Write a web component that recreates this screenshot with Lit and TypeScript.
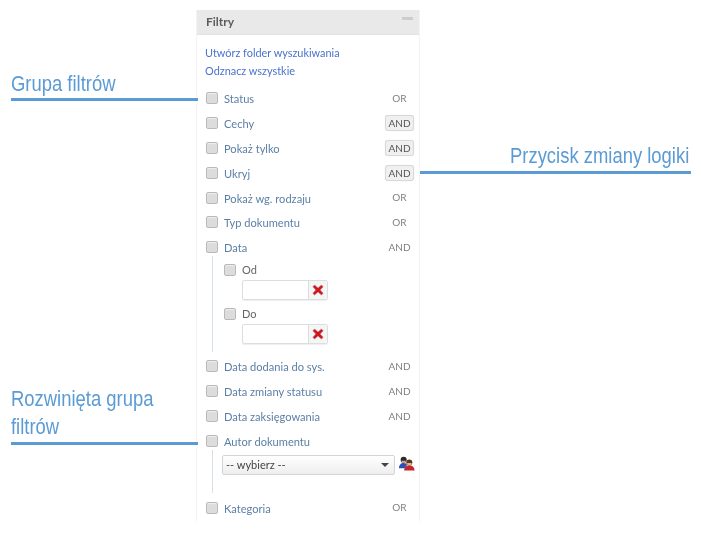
import { LitElement, html, css, svg } from 'lit'
import { customElement } from 'lit/decorators.js'

const clearIcon = svg`<svg width="12" height="12" viewBox="0 0 12 12"><path d="M2.600 1 6 3.900 9.400 1 11.200 2.800 8.200 6 11.200 9.300 9.400 11 6 8.100 2.600 11 .8 9.300 3.800 6 .8 2.800z" fill="#d3161c" stroke="#a9858a" stroke-width=".5"/></svg>`

const usersIcon = svg`<svg width="17" height="17" viewBox="0 0 18 18">
  <circle cx="6" cy="5" r="3.200" fill="#2b2a33"/>
  <path d="M3.700 6h4.600l-.5 2.200H4.200z" fill="#e0a678"/>
  <path d="M1 14c0-3.400 2-5.600 5-5.600 2 0 3 1 3.600 2.200L7 14z" fill="#2b50b8"/>
  <circle cx="12" cy="8" r="3.200" fill="#5a3b22"/>
  <path d="M9.600 8.600h4.800l-.5 2.600H10.100z" fill="#eeb184"/>
  <path d="M6.500 16.500c0-3.500 2.200-5.500 5.500-5.500s5.500 2 5.500 5.500z" fill="#c2272d"/>
</svg>`

interface Group {
  label: string
  logic: string
  button?: boolean
}

const top: Group[] = [
  { label: 'Status', logic: 'OR' },
  { label: 'Cechy', logic: 'AND', button: true },
  { label: 'Pokaż tylko', logic: 'AND', button: true },
  { label: 'Ukryj', logic: 'AND', button: true },
  { label: 'Pokaż wg. rodzaju', logic: 'OR' },
  { label: 'Typ dokumentu', logic: 'OR' },
  { label: 'Data', logic: 'AND' },
]

const middle: Group[] = [
  { label: 'Data dodania do sys.', logic: 'AND' },
  { label: 'Data zmiany statusu', logic: 'AND' },
  { label: 'Data zaksięgowania', logic: 'AND' },
  { label: 'Autor dokumentu', logic: '' },
]

@customElement('app-root')
export class AppRoot extends LitElement {
  static styles = css`
    :host {
      display: block;
      position: relative;
      width: 701px;
      height: 534px;
      background: #fff;
      overflow: hidden;
      font-family: Lato, sans-serif;
    }

    .panel {
      box-sizing: border-box;
      width: 224px;
      height: 511px;
      margin: 10px 0 0 196px;
      border: solid #f3f3f3;
      border-width: 0 1px;
      filter: blur(0.35px);
    }

    .head {
      height: 24px;
      background: #e9e9e9;
      border-bottom: 1px solid #e2e2e2;
      display: flex;
      justify-content: space-between;
      padding: 0 6px 0 9px;
      font-size: 12px;
      font-weight: 700;
      line-height: 24px;
      color: #5c5c5c;
    }

    .head i {
      width: 11px;
      height: 3px;
      margin-top: 7px;
      background: #cdcdcd;
    }

    .links {
      display: flex;
      flex-direction: column;
      gap: 2px;
      padding: 10px 0 7px 8px;
      font-size: 10.900px;
      line-height: 16px;
      color: #4a72cf;
    }

    .row {
      height: 24.8px;
      display: flex;
      align-items: center;
      padding: 0 5px 0 9px;
      font-size: 11.100px;
      color: #5b7fa6;
    }

    .box {
      box-sizing: border-box;
      flex: none;
      width: 12px;
      height: 12px;
      margin-right: 6px;
      background: #dcdcdc;
      border: 1px solid #b9b9b9;
      border-radius: 2px;
      box-shadow: inset 0 1px 1px #eee;
    }

    .label {
      flex: 1;
      padding-top: 1px;
    }

    .logic {
      width: 29px;
      text-align: center;
      font-size: 10px;
      color: #808080;
      padding-bottom: 1px;
    }

    .logic.button {
      box-sizing: border-box;
      height: 16px;
      line-height: 14px;
      padding: 0;
      color: #555;
      background: #f0f0f0;
      border: 1px solid #d8d8d8;
      border-radius: 3px;
      box-shadow: 0 0 1px #ddd;
    }

    .sub {
      box-sizing: content-box;
      height: 91.500px;
      margin: -3.500px 0 2px 15px;
      padding: 4.500px 0 0 11px;
      border-left: 1px solid #d5e0ea;
    }

    .sub.author {
      height: 38px;
      margin: -3.400px 0 2.600px 15px;
      padding: 5px 0 0 9px;
    }

    .check {
      height: 18px;
      display: flex;
      align-items: center;
      font-size: 11px;
      color: #666;
    }

    .date {
      box-sizing: border-box;
      display: flex;
      width: 86px;
      height: 20px;
      margin: 1px 0 5px 18px;
      border: 1px solid #ddd;
      border-radius: 2px;
      box-shadow: 0 1px 1px #eee;
    }

    .date span {
      flex: 1;
      border-right: 1px solid #ddd;
    }

    .date b {
      width: 18px;
      display: flex;
      align-items: center;
      justify-content: center;
      background: #f5f5f5;
    }

    .select-row {
      display: flex;
      align-items: flex-start;
      gap: 3px;
    }

    .select {
      box-sizing: border-box;
      width: 173px;
      height: 20px;
      display: flex;
      align-items: center;
      justify-content: space-between;
      padding: 0 3px;
      font-size: 11px;
      color: #444;
      background: linear-gradient(#fff, #eee);
      border: 1px solid #d4d4d4;
      border-radius: 2px;
    }

    .select i {
      border: solid transparent;
      border-width: 4px 4px 0;
      border-top-color: #444;
      margin-right: 2px;
    }

    .note {
      position: absolute;
      font-family: 'Liberation Sans', sans-serif;
      font-size: 22px;
      line-height: 28px;
      color: #5b9bd5;
      white-space: nowrap;
      transform: scaleX(0.838);
      transform-origin: left top;
    }

    .rule {
      position: absolute;
      height: 3px;
      background: #5b9bd5;
    }
  `

  private row(g: Group) {
    return html`
      <div class="row">
        <span class="box"></span>
        <span class="label">${g.label}</span>
        <span class="logic ${g.button ? 'button' : ''}">${g.logic}</span>
      </div>
    `
  }

  private dateField(label: string) {
    return html`
      <div class="check"><span class="box"></span>${label}</div>
      <div class="date"><span></span><b>${clearIcon}</b></div>
    `
  }

  render() {
    return html`
      <div class="panel">
        <div class="head">Filtry<i></i></div>
        <div class="links">
          <span>Utwórz folder wyszukiwania</span>
          <span>Odznacz wszystkie</span>
        </div>
        ${top.map((g) => this.row(g))}
        <div class="sub">
          ${this.dateField('Od')}
          ${this.dateField('Do')}
        </div>
        ${middle.map((g) => this.row(g))}
        <div class="sub author">
          <div class="select-row">
            <div class="select">-- wybierz --<i></i></div>
            ${usersIcon}
          </div>
        </div>
        ${this.row({ label: 'Kategoria', logic: 'OR' })}
      </div>

      <div class="note" style="left:11px;top:70px">Grupa filtrów</div>
      <div class="rule" style="left:11px;top:98px;width:187px"></div>

      <div class="note" style="left:510px;top:142px">Przycisk zmiany logiki</div>
      <div class="rule" style="left:420px;top:171px;width:271px"></div>

      <div class="note" style="left:11px;top:385px">Rozwinięta grupa<br />filtrów</div>
      <div class="rule" style="left:11px;top:442px;width:187px"></div>
    `
  }
}

declare global {
  interface HTMLElementTagNameMap {
    'app-root': AppRoot
  }
}
